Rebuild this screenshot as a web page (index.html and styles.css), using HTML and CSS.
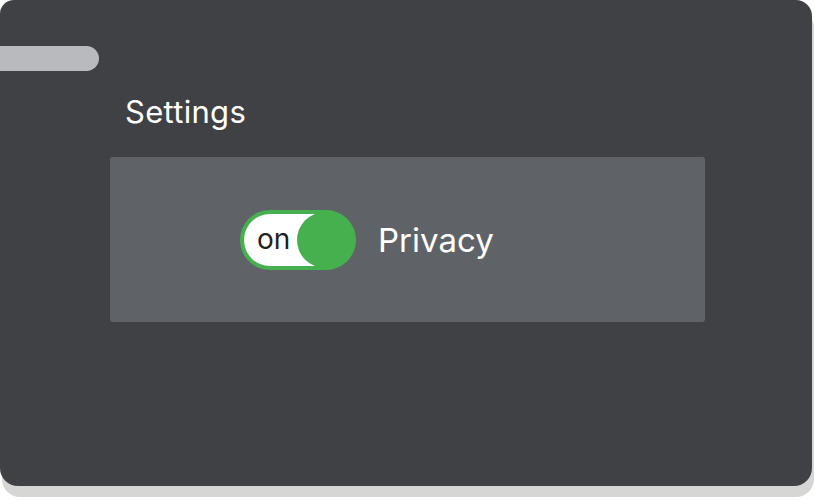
FILE: index.html
```html
<!DOCTYPE html>
<html lang="en">
<head>
<meta charset="utf-8">
<title>Settings</title>
<link rel="stylesheet" href="styles.css">
</head>
<body>
<div class="panel">
  <div class="tab-bar"></div>
  <h1 class="title">Settings</h1>
  <div class="card">
    <div class="toggle" role="switch" aria-checked="true">
      <span class="toggle-track"><span class="toggle-label">on</span></span>
      <span class="toggle-knob"></span>
    </div>
    <span class="card-label">Privacy</span>
  </div>
</div>
</body>
</html>
```
FILE: styles.css
```css
html, body {
  margin: 0;
  padding: 0;
  background: #ffffff;
}
body {
  width: 815px;
  height: 500px;
  font-family: Inter, "Noto Sans", sans-serif;
  overflow: hidden;
}
.panel {
  width: 812px;
  height: 486px;
  background: #3f4145;
  border-radius: 14px 16px 18px 18px;
  box-shadow: 2px 11px 0 #d6d6d4;
  display: flex;
  flex-direction: column;
}
.tab-bar {
  margin-top: 46px;
  width: 99px;
  height: 25px;
  background: #b9babd;
  border-radius: 0 13px 13px 0;
}
.title {
  margin: 23px 0 0 125px;
  font-size: 31px;
  line-height: 36px;
  font-weight: 400;
  color: #ffffff;
  letter-spacing: 0.3px;
}
.card {
  margin: 27px 0 0 110px;
  width: 595px;
  height: 165px;
  background: #5f6367;
  border-radius: 3px;
  display: flex;
  align-items: center;
  padding-left: 130px;
  box-sizing: border-box;
  gap: 22px;
}
.toggle {
  position: relative;
  width: 116px;
  height: 60px;
  background: #46b04f;
  border-radius: 30px;
  box-sizing: border-box;
  padding: 4px;
  flex-shrink: 0;
}
.toggle-track {
  display: flex;
  align-items: center;
  height: 100%;
  width: 80px;
  background: #ffffff;
  border-radius: 26px 0 0 26px;
}
.toggle-label {
  margin-left: 13px;
  font-size: 28px;
  font-weight: 400;
  color: #1f2022;
  line-height: 1;
  margin-top: -2px;
}
.toggle-knob {
  position: absolute;
  top: 2px;
  right: 3px;
  width: 56px;
  height: 56px;
  border-radius: 50%;
  background: #46b04f;
}
.card-label {
  font-size: 33px;
  color: #ffffff;
  font-weight: 400;
  line-height: 40px;
}
```
